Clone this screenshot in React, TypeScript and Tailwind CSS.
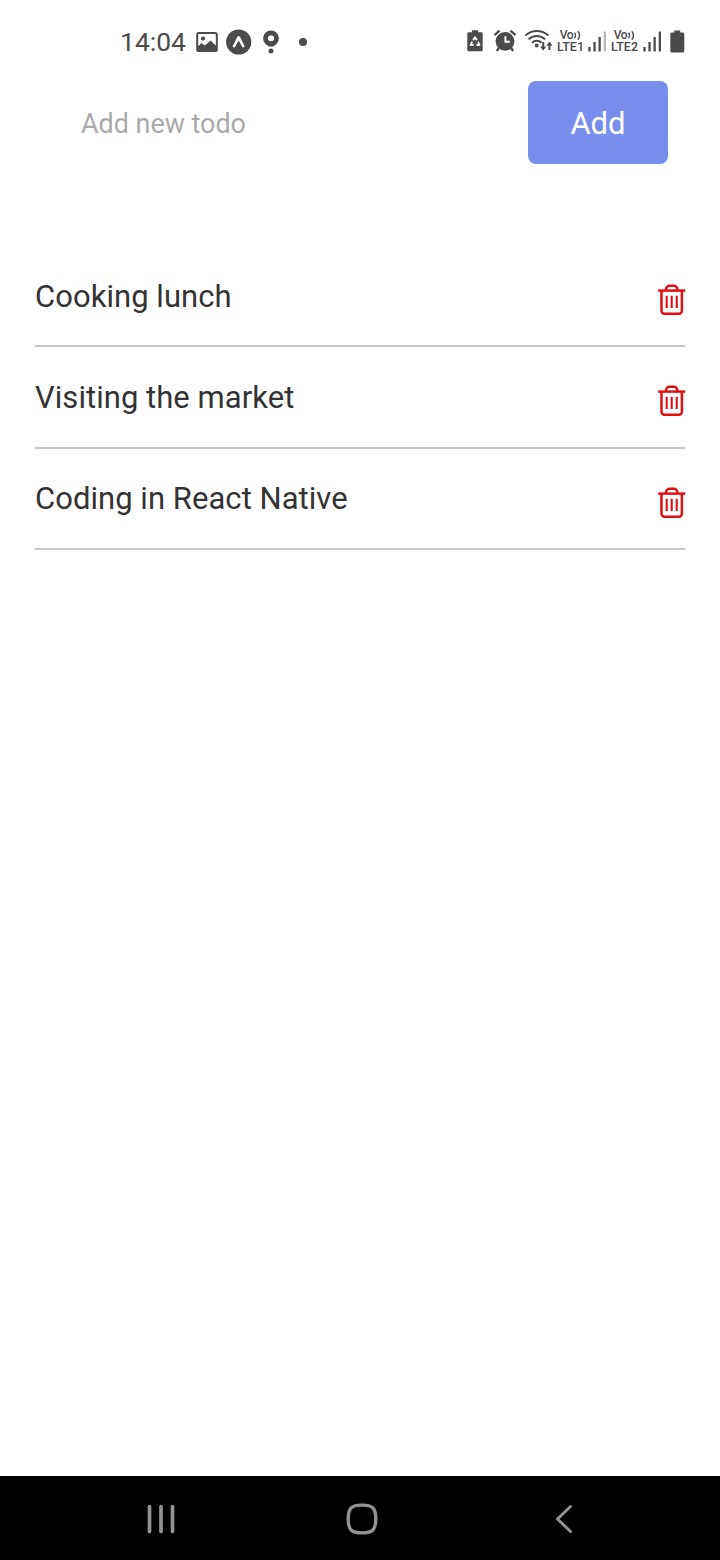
import { useState } from 'react';

const INK = '#4b4b4b';

function PictureIcon() {
  return (
    <svg className="ml-[10px] h-6 w-6" viewBox="195 30 24 24" fill="none">
      <rect x="197.2" y="33" width="19.6" height="18" rx="1.6" stroke={INK} strokeWidth="2" />
      <circle cx="203" cy="38.6" r="2.1" fill={INK} />
      <path d="M197.5 46.5l4.2-3.2 3.2 2.3 5.6-5.2 6.3 6V51h-19z" fill={INK} />
    </svg>
  );
}

function ExpoIcon() {
  return (
    <svg className="ml-[6px] h-[26px] w-[27px]" viewBox="225 28.5 27 26">
      <circle cx="238.7" cy="41.5" r="12.6" fill={INK} />
      <path
        d="M237.4 36.2c.7-.9 1.8-.9 2.5 0l4.6 9.4c.4 1-1.3 2.2-2.2 1l-3.6-6.6-3.7 6.6c-.9 1.2-2.6 0-2.2-1z"
        fill="#fff"
      />
    </svg>
  );
}

function PinIcon() {
  return (
    <svg className="ml-[9px] h-[26px] w-5" viewBox="261 28.5 20 26">
      <circle cx="271" cy="37.8" r="5.4" fill="none" stroke={INK} strokeWidth="5" />
      <path d="M265.5 42h11L273.4 46h-4.8z" fill={INK} />
      <circle cx="271" cy="37.8" r="2.8" fill="#fff" />
      <circle cx="271" cy="50.4" r="2.5" fill={INK} />
    </svg>
  );
}

function EcoBatteryIcon() {
  return (
    <svg className="h-6 w-4" viewBox="467.5 29 16 24">
      <path d="M472.4 30.2h6.2v2.1h3.2a1.4 1.4 0 011.4 1.4v16.2a1.4 1.4 0 01-1.4 1.4h-12.6a1.4 1.4 0 01-1.4-1.4V33.7a1.4 1.4 0 011.4-1.4h3.2z" fill={INK} />
      <path d="M473.6 40.2l1.9-2.9 1.9 2.9M478.6 41.6l1.4 3.4h-3M474.3 45h-3.1l1.4-3.4" fill="none" stroke="#fff" strokeWidth="1.8" strokeLinejoin="round" />
    </svg>
  );
}

function AlarmIcon() {
  return (
    <svg className="ml-[10px] h-6 w-6" viewBox="493.5 29 24 24">
      <circle cx="505.5" cy="41.3" r="9.4" fill={INK} />
      <path d="M495 35.2l5-4.5M516 35.2l-5-4.5M499.3 48l-2 3M511.7 48l2 3" stroke={INK} strokeWidth="2.3" />
      <path d="M505.9 36.2v5.6h4.4" fill="none" stroke="#fff" strokeWidth="1.9" />
    </svg>
  );
}

function WifiIcon() {
  return (
    <svg className="ml-[7px] h-6 w-[29px]" viewBox="524.5 29 29 24" fill="none" stroke={INK} strokeWidth="2">
      <path d="M525.8 35.6c6.6-6.3 16.6-6.3 23 0M529 39.3c4.8-4.4 11.9-4.4 16.6 0M532.4 42.7c2.8-2.6 7-2.6 9.8 0" />
      <circle cx="537.2" cy="45.5" r="1.9" fill={INK} stroke="none" />
      <path d="M543.7 42v6M549.9 50v-6" />
      <path d="M540.6 46.5h6.2l-3.1 4.2zM546.8 45.7h6.2l-3.1-4.2z" fill={INK} stroke="none" />
    </svg>
  );
}

function Carrier({ slot }: { slot: number }) {
  return (
    <div className="flex w-[27px] flex-col items-center text-[12.5px] leading-[11px] font-medium whitespace-nowrap text-[#4b4b4b]">
      <div className="flex items-center">
        <span className="text-[12px] tracking-[-0.4px]">Vo</span>
        <svg className="h-[11px] w-[8px]" viewBox="0 0 8 11" fill="none" stroke={INK} strokeWidth="1.4">
          <path d="M1.5 2.8q2 2.6 0 5.4M4.8 1.2q3.4 4.2 0 8.6" />
        </svg>
      </div>
      <span>LTE{slot}</span>
    </div>
  );
}

function SignalIcon({ weak = false }: { weak?: boolean }) {
  return (
    <svg className="h-[22px] w-[19px]" viewBox="0 0 19 22" fill={INK}>
      <rect x=".3" y="17" width="2.3" height="4.5" rx=".5" />
      <rect x="5.4" y="12" width="2.3" height="9.5" rx=".5" />
      <rect x="10.5" y="7" width="2.3" height="14.5" rx=".5" />
      <rect x="15.7" y="1.5" width="2.3" height="20" rx=".5" fill={weak ? '#b9b9b9' : INK} />
    </svg>
  );
}

function BatteryIcon() {
  return (
    <svg className="ml-2 h-[23px] w-[15px]" viewBox="0 0 15 23">
      <path d="M4.2.5h6v2h2.4c1 0 1.7.6 1.7 1.5v17c0 .9-.7 1.5-1.7 1.5H2c-1 0-1.7-.6-1.7-1.5V4c0-.9.7-1.5 1.7-1.5h2.2z" fill={INK} />
    </svg>
  );
}

function TrashIcon() {
  return (
    <svg className="h-8 w-7" viewBox="657.5 284 28 32" fill="none" stroke="#e01010" strokeWidth="2.5">
      <path d="M657.7 290.6h27" />
      <path d="M665.6 290.3v-1.2a3.3 3.3 0 013.3-3.3h4.6a3.3 3.3 0 013.3 3.3v1.2" />
      <path d="M661 290.8v20a2.9 2.9 0 002.9 2.9h14.6a2.9 2.9 0 002.9-2.9v-20" />
      <path d="M666.2 295.7v12.4M671.2 295.7v12.4M676.2 295.7v12.4" strokeWidth="2.1" />
    </svg>
  );
}

function StatusBar() {
  return (
    <header className="flex h-[81px] items-start justify-between pr-[35px] pl-[120px]">
      <div className="mt-[28px] flex h-[27px] items-center">
        <span className="w-[65px] text-[26.5px] leading-[26px] whitespace-nowrap text-[#4b4b4b]">14:04</span>
        <PictureIcon />
        <ExpoIcon />
        <PinIcon />
        <span className="ml-[18px] size-2 rounded-full bg-[#4b4b4b]" />
      </div>
      <div className="mt-[29px] flex h-6 items-center">
        <EcoBatteryIcon />
        <AlarmIcon />
        <WifiIcon />
        <div className="ml-[3.7px] flex items-center">
          <Carrier slot={1} />
          <span className="w-1" />
          <SignalIcon weak />
          <span className="w-1" />
          <Carrier slot={2} />
          <span className="w-[5px]" />
          <SignalIcon />
        </div>
        <BatteryIcon />
      </div>
    </header>
  );
}

export default function App() {
  const [todos, setTodos] = useState(['Cooking lunch', 'Visiting the market', 'Coding in React Native']);
  const [draft, setDraft] = useState('');

  const add = () => {
    if (!draft.trim()) return;
    setTodos([...todos, draft.trim()]);
    setDraft('');
  };

  return (
    <div className="flex h-[1560px] w-[720px] flex-col bg-white font-[Roboto,sans-serif]">
      <StatusBar />
      <div className="flex h-[83px] items-center justify-between pr-[52px] pl-[81px]">
        <input
          className="w-[400px] pt-0.5 text-[26.9px] leading-8 text-[#333] outline-none placeholder:text-[#aaa] placeholder:opacity-100"
          placeholder="Add new todo"
          value={draft}
          onChange={(e) => setDraft(e.target.value)}
        />
        <button onClick={add} className="h-[83px] w-[140px] rounded-[8px] bg-[#788eec] pt-[3px] text-[31px] text-white">
          Add
        </button>
      </div>
      <ul className="mt-[82px] flex-1 px-[35px]">
        {todos.map((todo, i) => (
          <li key={i} className="flex h-[101.4px] items-start justify-between border-b-2 border-[#c8c8c8] pt-8">
            <span className="-mt-[0.5px] text-[31px] leading-[37px] tracking-[0.04px] text-[#333]">{todo}</span>
            <button aria-label="Delete" className="mt-[6.1px] -mr-[1px]" onClick={() => setTodos(todos.filter((_, n) => n !== i))}>
              <TrashIcon />
            </button>
          </li>
        ))}
      </ul>
      <nav className="flex h-[84px] items-center bg-black pt-[2px] pl-[146px]">
        <svg className="h-9 w-[30px]" viewBox="0 0 30 36" stroke="#929292" strokeWidth="3.7" strokeLinecap="round">
          <path d="M3.5 5.5v25M15 5.5v25M26.5 5.5v25" />
        </svg>
        <svg className="ml-[168px] size-9" viewBox="0 0 36 36" fill="none" stroke="#929292" strokeWidth="3.4">
          <path d="M18 4.1c10.7 0 13.8 3.1 13.8 13.9S28.7 31.9 18 31.9 4.2 28.8 4.2 18 7.3 4.1 18 4.1z" />
        </svg>
        <svg className="ml-[170px] h-9 w-6" viewBox="0 0 24 36" fill="none" stroke="#929292" strokeWidth="3" strokeLinecap="round" strokeLinejoin="round">
          <path d="M20.5 5.5L7.5 18l13 12.5" />
        </svg>
      </nav>
    </div>
  );
}
